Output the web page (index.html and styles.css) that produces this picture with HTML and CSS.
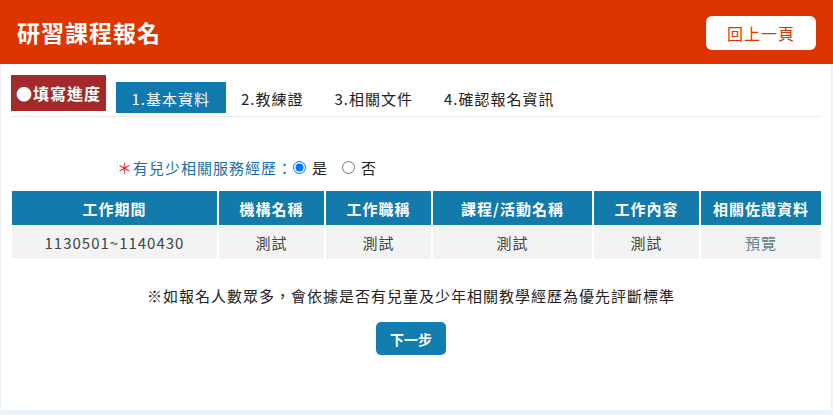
FILE: index.html
```html
<!DOCTYPE html>
<html lang="zh-Hant">
<head>
<meta charset="utf-8">
<title>研習課程報名</title>
<link rel="stylesheet" href="styles.css">
</head>
<body>
<header class="topbar">
  <h1 class="title">研習課程報名</h1>
  <button class="back-btn" type="button">回上一頁</button>
</header>
<main class="card">
  <div class="progress">
    <div class="progress-label">●填寫進度</div>
    <ul class="tabs">
      <li class="tab active">1.基本資料</li>
      <li class="tab">2.教練證</li>
      <li class="tab">3.相關文件</li>
      <li class="tab">4.確認報名資訊</li>
    </ul>
  </div>

  <div class="question">
    <span class="req">＊</span><span class="q-text">有兒少相關服務經歷：</span>
    <label class="opt"><input type="radio" name="exp" checked>是</label>
    <label class="opt"><input type="radio" name="exp">否</label>
  </div>

  <table class="exp-table">
    <colgroup>
      <col class="c1"><col class="c2"><col class="c3"><col class="c4"><col class="c5"><col class="c6">
    </colgroup>
    <thead>
      <tr>
        <th>工作期間</th><th>機構名稱</th><th>工作職稱</th><th>課程/活動名稱</th><th>工作內容</th><th>相關佐證資料</th>
      </tr>
    </thead>
    <tbody>
      <tr>
        <td>1130501~1140430</td><td>測試</td><td>測試</td><td>測試</td><td>測試</td><td class="preview">預覽</td>
      </tr>
    </tbody>
  </table>

  <div class="foot">
    <p class="note">※如報名人數眾多，會依據是否有兒童及少年相關教學經歷為優先評斷標準</p>
    <button class="next-btn" type="button">下一步</button>
  </div>
</main>
</body>
</html>
```

FILE: styles.css
```css
* { box-sizing: border-box; }

html, body {
  margin: 0;
  padding: 0;
}

body {
  width: 833px;
  height: 415px;
  background: #eef3f8;
  font-family: "Noto Sans CJK TC", "Noto Sans", sans-serif;
  letter-spacing: 1px;
  color: #333;
  overflow: hidden;
}

.topbar {
  height: 64px;
  background: #dd3500;
  display: flex;
  align-items: center;
  justify-content: space-between;
  padding: 0 17px 0 17px;
}

.title {
  margin: 0;
  color: #fff;
  font-size: 23px;
  font-weight: 700;
  letter-spacing: 1px;
  line-height: 1;
}

.back-btn {
  width: 110px;
  height: 34px;
  background: #fff;
  border: none;
  border-radius: 6px;
  color: #dd3500;
  font-family: inherit;
  font-size: 16px;
  letter-spacing: 1px;
  padding: 0;
  margin-top: 2px;
}

.card {
  background: #fff;
  margin: 0 2px 0 1px;
  height: 346px;
  padding: 11px 11px 0 10px;
}

.progress {
  display: flex;
  align-items: flex-end;
  gap: 10px;
  padding-bottom: 3px;
  border-bottom: 1px solid #ebebeb;
}

.progress-label {
  width: 95px;
  height: 36px;
  background: #a3292a;
  color: #fff;
  font-size: 16px;
  font-weight: 700;
  letter-spacing: 1px;
  display: flex;
  align-items: center;
  justify-content: center;
  margin-bottom: 2px;
}

.tabs {
  list-style: none;
  margin: 0;
  padding: 0;
  display: flex;
}

.tab {
  height: 31px;
  padding: 0 15.5px;
  font-size: 15px;
  line-height: 33px;
  color: #222;
}

.tab.active {
  background: #1079ad;
  color: #fff;
}

.question {
  margin: 38px 0 0 106px;
  height: 24px;
  display: flex;
  align-items: center;
  font-size: 15px;
}

.req {
  color: #e8231f;
}

.q-text {
  color: #1a6fa6;
}

.opt {
  display: flex;
  align-items: center;
  color: #222;
}

.opt input {
  margin: 0 6px 0 0;
  width: 13px;
  height: 13px;
}

.opt + .opt {
  margin-left: 14px;
}

.exp-table {
  margin: 11px 0 0 -1px;
  width: 813px;
  table-layout: fixed;
  border-collapse: separate;
  border-spacing: 2px 1px;
  font-size: 15px;
  text-align: center;
}

.c1 { width: 205px; }
.c2 { width: 105px; }
.c3 { width: 105px; }
.c4 { width: 159px; }
.c5 { width: 105px; }
.c6 { width: 120px; }

.exp-table th {
  background: #127bac;
  color: #fff;
  font-weight: 700;
  height: 34px;
  padding: 0;
}

.exp-table td {
  background: #f3f3f3;
  color: #444;
  height: 33px;
  padding: 0;
}

.exp-table td.preview {
  color: #5f7f8c;
}

.foot {
  width: 800px;
  display: flex;
  flex-direction: column;
  align-items: center;
}

.note {
  margin: 26px 0 0;
  font-size: 15px;
  line-height: 20px;
  letter-spacing: 1px;
  color: #222;
}

.next-btn {
  margin-top: 16px;
  width: 70px;
  height: 33px;
  border: none;
  border-radius: 5px;
  background: #127daf;
  color: #fff;
  font-family: inherit;
  font-size: 14px;
  font-weight: 700;
  letter-spacing: 0;
  padding: 0;
}
```
